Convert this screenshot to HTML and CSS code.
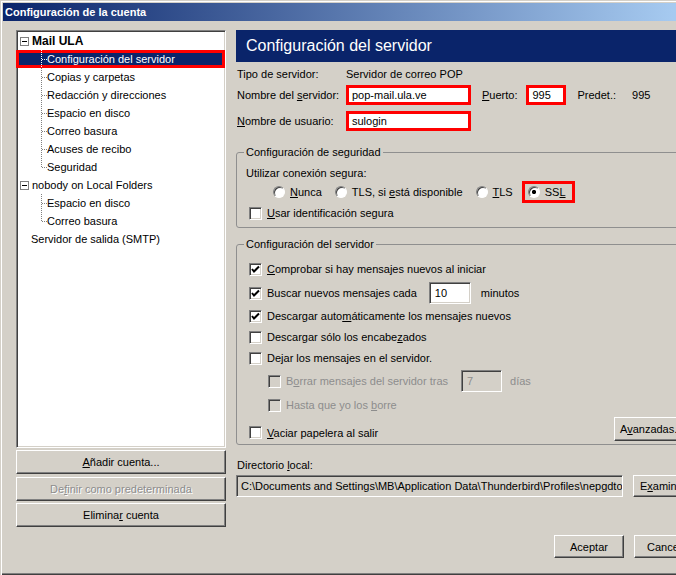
FILE: index.html
```html
<!DOCTYPE html>
<html lang="es">
<head>
  <meta charset="UTF-8" />
  <title>Configuración de la cuenta</title>
  <link rel="stylesheet" href="styles.css">
</head>
<body>

<div class="win">
  <div class="titlebar">Configuración de la cuenta</div>

  <div class="content">
    <div class="side">
      <div class="tree">
        <div class="tree-row top"><span class="minus"></span><b>Mail ULA</b></div>
        <div class="tree-row child selected"><svg class="branch" width="6" height="18"><line x1="0.5" y1="0" x2="0.5" y2="18"/><line x1="1" y1="9.5" x2="6" y2="9.5"/></svg>Configuración del servidor</div>
        <div class="tree-row child"><svg class="branch" width="6" height="18"><line x1="0.5" y1="0" x2="0.5" y2="18"/><line x1="1" y1="9.5" x2="6" y2="9.5"/></svg>Copias y carpetas</div>
        <div class="tree-row child"><svg class="branch" width="6" height="18"><line x1="0.5" y1="0" x2="0.5" y2="18"/><line x1="1" y1="9.5" x2="6" y2="9.5"/></svg>Redacción y direcciones</div>
        <div class="tree-row child"><svg class="branch" width="6" height="18"><line x1="0.5" y1="0" x2="0.5" y2="18"/><line x1="1" y1="9.5" x2="6" y2="9.5"/></svg>Espacio en disco</div>
        <div class="tree-row child"><svg class="branch" width="6" height="18"><line x1="0.5" y1="0" x2="0.5" y2="18"/><line x1="1" y1="9.5" x2="6" y2="9.5"/></svg>Correo basura</div>
        <div class="tree-row child"><svg class="branch" width="6" height="18"><line x1="0.5" y1="0" x2="0.5" y2="18"/><line x1="1" y1="9.5" x2="6" y2="9.5"/></svg>Acuses de recibo</div>
        <div class="tree-row child"><svg class="branch" width="6" height="18"><line x1="0.5" y1="0" x2="0.5" y2="10"/><line x1="1" y1="9.5" x2="6" y2="9.5"/></svg>Seguridad</div>
        <div class="tree-row top"><span class="minus"></span>nobody on Local Folders</div>
        <div class="tree-row child"><svg class="branch" width="6" height="18"><line x1="0.5" y1="0" x2="0.5" y2="18"/><line x1="1" y1="9.5" x2="6" y2="9.5"/></svg>Espacio en disco</div>
        <div class="tree-row child"><svg class="branch" width="6" height="18"><line x1="0.5" y1="0" x2="0.5" y2="10"/><line x1="1" y1="9.5" x2="6" y2="9.5"/></svg>Correo basura</div>
        <div class="tree-row top leaf">Servidor de salida (SMTP)</div>
      </div>
      <div class="btn side-btn first"><span><u>A</u>ñadir cuenta...</span></div>
      <div class="btn side-btn second disabled"><span>De<u>f</u>inir como predeterminada</span></div>
      <div class="btn side-btn third"><span>Elimina<u>r</u> cuenta</span></div>
    </div>

    <div class="main">
      <div class="header">Configuración del servidor</div>

      <div class="row r-type">
        <span class="lbl">Tipo de servidor:</span>
        <span>Servidor de correo POP</span>
      </div>
      <div class="row r-host">
        <span class="lbl">Nombre del <u>s</u>ervidor:</span>
        <span class="field marked w-host">pop-mail.ula.ve</span>
        <span class="port-lbl"><u>P</u>uerto:</span>
        <span class="field marked w-port">995</span>
        <span class="def-lbl">Predet.:</span>
        <span>995</span>
      </div>
      <div class="row r-user">
        <span class="lbl"><u>N</u>ombre de usuario:</span>
        <span class="field marked w-host">sulogin</span>
      </div>

      <fieldset class="group sec">
        <legend>Configuración de seguridad</legend>
        <div class="row r-use">Utilizar conexión segura:</div>
        <div class="row radios">
          <span class="opt"><span class="radio"></span><span><u>N</u>unca</span></span>
          <span class="opt"><span class="radio"></span><span>TLS, si <u>e</u>stá disponible</span></span>
          <span class="opt"><span class="radio"></span><span><u>T</u>LS</span></span>
          <span class="opt ssl"><span class="radio on"></span><span>SS<u>L</u></span></span>
        </div>
        <div class="row r-auth"><span class="check"></span><span><u>U</u>sar identificación segura</span></div>
      </fieldset>

      <fieldset class="group srv">
        <legend>Configuración del servidor</legend>
        <div class="row c1"><span class="check"><svg width="9" height="9"><polyline points="1,4 3,6.5 8,1.5"/></svg></span><span><u>C</u>omprobar si hay mensajes nuevos al iniciar</span></div>
        <div class="row c2"><span class="check"><svg width="9" height="9"><polyline points="1,4 3,6.5 8,1.5"/></svg></span><span>Buscar nuevos mensa<u>j</u>es cada</span><span class="field num">10</span><span class="unit">minutos</span></div>
        <div class="row c3"><span class="check"><svg width="9" height="9"><polyline points="1,4 3,6.5 8,1.5"/></svg></span><span>Descargar auto<u>m</u>áticamente los mensajes nuevos</span></div>
        <div class="row c4"><span class="check"></span><span>Descargar sólo los encabe<u>z</u>ados</span></div>
        <div class="row c5"><span class="check"></span><span>De<u>j</u>ar los mensajes en el servidor.</span></div>
        <div class="row c6 sub disabled"><span class="check off"></span><span>B<u>o</u>rrar mensajes del servidor tras</span><span class="field num off">7</span><span class="unit days">días</span></div>
        <div class="row c7 sub disabled"><span class="check off"></span><span>Hasta que yo los <u>b</u>orre</span></div>
        <div class="row c8">
          <span class="c8-label"><span class="check"></span><span><u>V</u>aciar papelera al salir</span></span>
          <span class="btn adv"><span>A<u>v</u>anzadas...</span></span>
        </div>
      </fieldset>

      <div class="row r-dir"><span>Directorio <u>l</u>ocal:</span></div>
      <div class="row r-path">
        <span class="field path"><span class="path-text">C:\Documents and Settings\MB\Application Data\Thunderbird\Profiles\nepgdtoh</span></span>
        <span class="btn browse"><span>E<u>x</u>aminar...</span></span>
      </div>

      <div class="actions">
        <span class="btn act">Aceptar</span>
        <span class="btn act">Cancelar</span>
      </div>
    </div>
  </div>
</div>

</body>
</html>
```

FILE: styles.css
```css
* {
  box-sizing: border-box;
}

body {
  margin: 0;
  width: 676px;
  height: 575px;
  overflow: hidden;
  background: #d4d0c8;
  font-family: "Liberation Sans", Arial, sans-serif;
  font-size: 11px;
  color: #000;
}

u {
  text-decoration: underline;
  text-underline-offset: 1px;
}

.win {
  width: 716px;
  height: 575px;
  padding: 3px 0 0 3px;
  background: #d4d0c8;
  box-shadow: inset 1px 1px 0 #d4d0c8, inset 2px 2px 0 #fff, inset 0 -1px 0 #404040, inset 0 -2px 0 #808080;
}

.titlebar {
  height: 18px;
  line-height: 18px;
  padding-left: 2px;
  color: #fff;
  font-weight: bold;
  background: linear-gradient(to right, #0a246a, #a6caf0 94%);
}

.content {
  display: flex;
  padding-top: 9px;
}

/* left column */

.side {
  width: 210px;
  margin-left: 13px;
}

.tree {
  height: 418px;
  background: #fff;
  border: 1px solid;
  border-color: #808080 #fff #fff #808080;
  box-shadow: inset 1px 1px 0 #404040, inset -1px -1px 0 #d4d0c8;
  padding: 1px 1px 0 2px;
}

.tree-row {
  height: 18px;
  display: flex;
  align-items: center;
  white-space: nowrap;
}

.tree-row.top {
  padding-left: 1px;
}

.tree-row.leaf {
  padding-left: 12px;
}

.tree-row.child {
  padding-left: 22px;
}

.minus {
  width: 9px;
  height: 9px;
  margin-right: 3px;
  border: 1px solid #808080;
  background: #fff linear-gradient(#000, #000) no-repeat center / 5px 1px;
}

.tree-row b {
  font-size: 12px;
}

.branch {
  flex: none;
}

.branch line {
  stroke: #808080;
  stroke-width: 1;
  stroke-dasharray: 1 1;
  shape-rendering: crispEdges;
}

.tree-row.selected {
  margin: 0 -1px 0 -3px;
  padding-left: 25px;
  background: #0a246a;
  color: #fff;
  box-shadow: inset 0 0 0 3px #f00;
}

.selected .branch line {
  stroke: #fff;
}

.btn {
  display: flex;
  align-items: center;
  justify-content: center;
  background: #d4d0c8;
  border: 1px solid;
  border-color: #fff #404040 #404040 #fff;
  box-shadow: inset -1px -1px 0 #808080;
  white-space: nowrap;
}

.side-btn {
  height: 24px;
}

.side-btn.first { margin-top: 2px; }
.side-btn.second { margin-top: 3px; }
.side-btn.third { margin-top: 2px; }

.disabled {
  color: #8d8d8d;
}

.btn.disabled {
  text-shadow: 1px 1px 0 #fff;
}

/* right column */

.main {
  width: 468px;
  margin-left: 10px;
}

.header {
  height: 32px;
  line-height: 32px;
  padding-left: 10px;
  background: #0a246a;
  color: #fff;
  font-size: 16px;
  white-space: nowrap;
}

.row {
  display: flex;
  align-items: center;
  white-space: nowrap;
}

.lbl {
  width: 110px;
  padding-left: 1px;
}

.r-type { height: 16px; margin-top: 4px; }
.r-host { height: 20px; margin-top: 3px; }
.r-user { height: 20px; margin-top: 6px; }

.field {
  display: flex;
  align-items: center;
  height: 21px;
  padding-left: 5px;
  background: #fff;
  border: 1px solid;
  border-color: #808080 #fff #fff #808080;
  box-shadow: inset 1px 1px 0 #404040, inset -1px -1px 0 #d4d0c8;
  overflow: hidden;
}

.field.marked {
  height: 20px;
  padding-left: 3px;
  border: 3px solid #f00;
  box-shadow: none;
}

.w-host { width: 125px; }
.w-port { width: 40px; }

.port-lbl { margin: 0 9px 0 11px; }
.def-lbl { margin: 0 16px 0 11px; }

.group {
  margin: 14px 0 0;
  padding: 6px 9px 5px 9px;
  border: 1px solid #8f8f8f;
  border-radius: 3px;
}

.group legend {
  padding: 0 2px;
  margin-left: -2px;
  line-height: 14px;
}

.r-use { height: 16px; }

.radios {
  height: 22px;
  padding-left: 27px;
}

.opt {
  display: flex;
  align-items: center;
  margin-right: 13px;
}

.radio {
  width: 12px;
  height: 12px;
  margin-right: 5px;
  border-radius: 50%;
  background: #fff;
  border: 1px solid;
  border-color: #808080 #fff #fff #808080;
  box-shadow: inset 1px 1px 0 #404040;
}

.radio.on {
  background: radial-gradient(circle, #000 1.8px, #fff 2.4px);
}

.opt.ssl {
  height: 22px;
  margin-left: -4px;
  padding: 0 6px 0 3px;
  border: 3px solid #f00;
}

.check {
  flex: none;
  width: 13px;
  height: 13px;
  margin: 0 5px 0 3px;
  display: flex;
  align-items: center;
  justify-content: center;
  background: #fff;
  border: 1px solid;
  border-color: #808080 #fff #fff #808080;
  box-shadow: inset 1px 1px 0 #404040, inset -1px -1px 0 #d4d0c8;
}

.check.off {
  background: #d4d0c8;
}

.check polyline {
  fill: none;
  stroke: #000;
  stroke-width: 2;
}

.r-auth { height: 18px; margin-top: 1px; }

.srv {
  margin-top: 9px;
  padding-top: 8px;
  padding-bottom: 3px;
}

.c1 { height: 20px; }
.c2 { height: 22px; margin-top: 3px; }
.c3 { height: 20px; margin-top: 2px; }
.c4 { height: 20px; margin-top: 1px; }
.c5 { height: 20px; margin-top: 1px; }
.c6 { height: 22px; margin-top: 2px; }
.c7 { height: 20px; margin-top: 3px; }
.c8 { height: 24px; margin-top: 2px; align-items: flex-end; }

.sub {
  padding-left: 19px;
}

.num {
  width: 42px;
  height: 22px;
  margin-left: 12px;
}

.num.off {
  width: 41px;
  margin-left: 13px;
  background: #d4d0c8;
  color: #8d8d8d;
}

.unit { margin-left: 10px; }
.unit.days { margin-left: 8px; }

.c8-label {
  flex: 1;
  display: flex;
  align-items: center;
  margin-bottom: 2px;
}

.adv {
  width: 80px;
  height: 24px;
  justify-content: flex-start;
  padding-left: 5px;
}

.r-dir { height: 16px; margin-top: 12px; padding-left: 1px; }

.r-path {
  height: 22px;
  margin-top: 2px;
  gap: 10px;
}

.field.path {
  flex: 1;
  min-width: 0;
  height: 22px;
  background: #d4d0c8;
  padding-left: 4px;
}

.path-text {
  overflow: hidden;
  text-overflow: clip;
}

.browse {
  flex: none;
  width: 71px;
  height: 22px;
  justify-content: flex-start;
  padding-left: 6px;
}

.actions {
  display: flex;
  justify-content: flex-end;
  gap: 10px;
  margin-top: 38px;
}

.act {
  width: 70px;
  height: 23px;
}
```
